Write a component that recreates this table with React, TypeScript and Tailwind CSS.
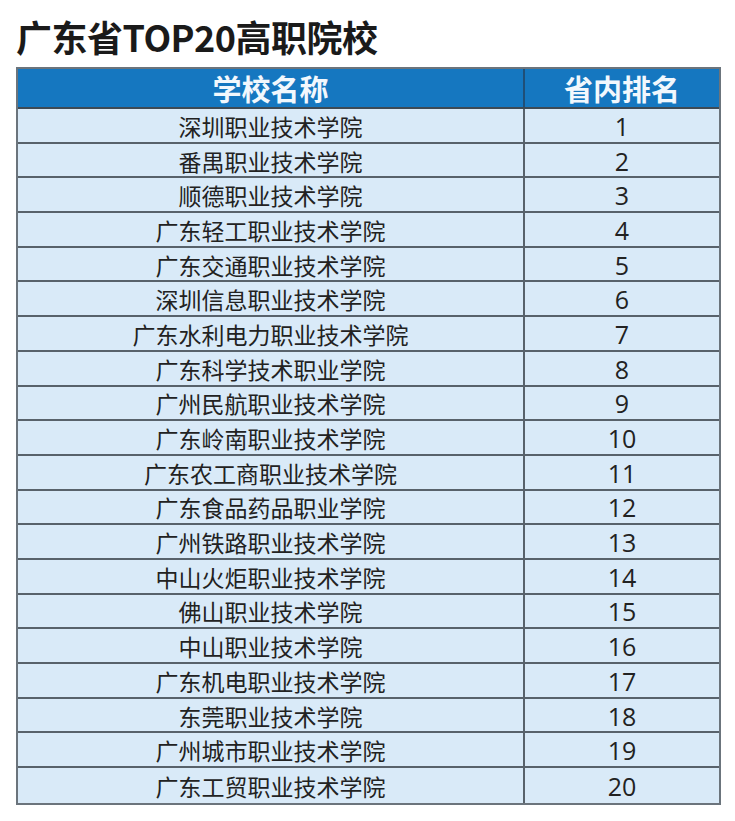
import React from 'react'

const SCHOOLS = [
  '深圳职业技术学院',
  '番禺职业技术学院',
  '顺德职业技术学院',
  '广东轻工职业技术学院',
  '广东交通职业技术学院',
  '深圳信息职业技术学院',
  '广东水利电力职业技术学院',
  '广东科学技术职业学院',
  '广州民航职业技术学院',
  '广东岭南职业技术学院',
  '广东农工商职业技术学院',
  '广东食品药品职业学院',
  '广州铁路职业技术学院',
  '中山火炬职业技术学院',
  '佛山职业技术学院',
  '中山职业技术学院',
  '广东机电职业技术学院',
  '东莞职业技术学院',
  '广州城市职业技术学院',
  '广东工贸职业技术学院',
]

const cjk = "font-['Noto_Sans_CJK_SC',sans-serif]"

export default function App() {
  return (
    <div className={`w-[735px] h-[821px] bg-white ${cjk}`}>
      <h1 className="pl-[16px] pt-[13px] h-[67px] text-[36px] leading-[46px] font-bold text-[#1a1a1a] tracking-[-0.5px]">
        广东省TOP20高职院校
      </h1>
      <div className="ml-[16px] w-[705px] border-2 border-[#6b747c]">
        <div className="grid grid-cols-[507px_1fr] h-[40px] bg-[#1577c0] border-b-2 border-[#3d4a55]">
          <div className="flex items-center justify-center border-r-2 border-[#1f4f78] text-[29px] leading-[32px] font-bold text-[#f2f8fd]">
            学校名称
          </div>
          <div className="flex items-center justify-center text-[29px] leading-[32px] font-bold text-[#f2f8fd]">
            省内排名
          </div>
        </div>
        {SCHOOLS.map((name, i) => (
          <div
            key={i}
            className={
              'grid grid-cols-[507px_1fr] h-[34.7px] bg-[#d9eaf8] ' +
              (i < SCHOOLS.length - 1 ? 'border-b-2 border-[#58626b]' : '')
            }
          >
            <div className="flex items-center justify-center pt-[1px] border-r-2 border-[#58626b] text-[23px] leading-[28px] text-[#222]">
              {name}
            </div>
            <div className="flex items-center justify-center pt-[1px] text-[25px] leading-[28px] text-[#222] font-['Open_Sans',sans-serif]">
              {i + 1}
            </div>
          </div>
        ))}
      </div>
    </div>
  )
}
